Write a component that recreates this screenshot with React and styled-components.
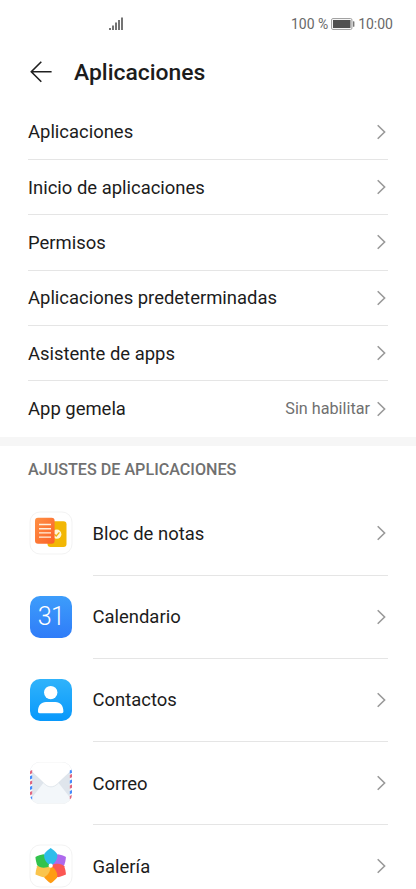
import React from 'react';
import styled, { createGlobalStyle } from 'styled-components';

const GlobalStyle = createGlobalStyle`
  * { box-sizing: border-box; }
  html, body { margin: 0; background: #fff; }
  body { overflow: hidden; font-family: Roboto, sans-serif; color: #1c1c1c; }
  svg { display: block; flex: none; }
`;

const Screen = styled.div`
  width: 416px;
  height: 889px;
  overflow: hidden;
  background: #fff;
`;

const StatusBar = styled.div`
  display: flex;
  align-items: center;
  justify-content: space-between;
  height: 48px;
  padding: 0 23px 0 108px;
`;

const StatusGroup = styled.div`
  display: flex;
  align-items: center;
  font-size: 14px;
  line-height: 20px;
  color: #696969;
  white-space: pre;
`;

const StatusText = styled.span`
  width: ${(p) => p.$width}px;
  text-align: ${(p) => p.$align || 'left'};
`;

const Header = styled.header`
  display: flex;
  align-items: center;
  gap: 21px;
  height: 56.6px;
  padding: 0 28px 8px 29px;
`;

const Title = styled.h1`
  margin: 2px 0 0;
  font-size: 22.9px;
  font-weight: 500;
  line-height: 30px;
`;

const List = styled.div`
  padding: 0 28px;
`;

const Row = styled.div`
  display: flex;
  align-items: center;
  height: ${(p) => (p.$large ? 83.2 : 55.35)}px;
`;

const RowBody = styled.div`
  display: flex;
  flex: 1;
  align-items: center;
  height: 100%;
  padding-right: 1px;
  border-bottom: ${(p) => (p.$last ? 0 : 1)}px solid #e5e5e5;
`;

const Label = styled.span`
  flex: 1;
  padding-top: 1px;
  font-size: 18.45px;
  line-height: 24px;
`;

const Value = styled.span`
  margin-right: 6px;
  padding-top: 1px;
  font-size: 16.2px;
  line-height: 22px;
  color: #707070;
`;

const Band = styled.div`
  height: 9.7px;
  background: #f6f6f6;
`;

const SectionTitle = styled.h2`
  display: flex;
  align-items: center;
  height: 46px;
  margin: 0;
  padding: 1px 28px 0;
  font-size: 16.15px;
  font-weight: 500;
  color: #707070;
`;

const IconSlot = styled.div`
  width: 64.5px;
  padding: 0 0 1px 1px;
`;

const Chevron = () => (
  <svg width="11" height="18" viewBox="0 0 11 18" fill="none" stroke="#999" strokeWidth="1.6">
    <path d="M1.7 2.2 8.6 9 1.7 15.8" />
  </svg>
);

const Tile = ({ children, fill = '#fff', stroke = '#f3f3f3' }) => (
  <svg width="44" height="44" viewBox="0 0 44 44">
    <rect x="1" y="1" width="42" height="42" rx="10" fill={fill} stroke={stroke} />
    {children}
  </svg>
);

const NotesIcon = () => (
  <Tile>
    <defs>
      <linearGradient id="noteOrange" x1="0" y1="0" x2="1" y2="1">
        <stop stopColor="#ff9044" />
        <stop offset="1" stopColor="#fb6128" />
      </linearGradient>
    </defs>
    <rect x="18.5" y="10.2" width="19" height="25.8" rx="3" fill="#f2b705" />
    <circle cx="27.8" cy="23.2" r="4.6" fill="#fff5d6" />
    <path d="m25.4 23.2 1.8 1.8 3.2-3.6" fill="none" stroke="#edb20b" strokeWidth="1.3" />
    <rect x="6" y="6.8" width="19.6" height="26" rx="3" fill="url(#noteOrange)" />
    <path d="M10 13.5h12M10 17.7h12M10 21.9h12M10 26.1h12" stroke="#fff0dc" strokeWidth="1.4" />
  </Tile>
);

const CalendarIcon = () => (
  <Tile fill="url(#calBlue)" stroke="none">
    <defs>
      <linearGradient id="calBlue" x1="0" y1="0" x2="0" y2="1">
        <stop stopColor="#3d9dfb" />
        <stop offset="1" stopColor="#2f7cf8" />
      </linearGradient>
    </defs>
    <text x="22" y="30.2" textAnchor="middle" fontFamily="Roboto, sans-serif" fontSize="25.2" fontWeight="300" letterSpacing="-.6" fill="#fff">31</text>
  </Tile>
);

const ContactsIcon = () => (
  <Tile fill="url(#contactBlue)" stroke="none">
    <defs>
      <linearGradient id="contactBlue" x1="0" y1="0" x2="0" y2="1">
        <stop stopColor="#30b3fb" />
        <stop offset="1" stopColor="#0898fb" />
      </linearGradient>
    </defs>
    <circle cx="21.7" cy="14.6" r="6.7" fill="#fff" />
    <path d="M9 33.5c0-6 3.2-9.5 8-9.5h9.4c4.8 0 8 3.5 8 9.5 0 1-.7 1.7-1.7 1.7h-22c-1 0-1.7-.7-1.7-1.7z" fill="#fff" />
  </Tile>
);

const MailIcon = () => (
  <svg width="44" height="44" viewBox="0 0 44 44">
    <defs>
      <clipPath id="mailTile"><rect x="1" y="1" width="42" height="42" rx="10" /></clipPath>
    </defs>
    <g clipPath="url(#mailTile)">
      <rect width="44" height="44" fill="#dfe5ec" />
      <path d="M3 36.5 16 20h12l13 16.5L44 44H0z" fill="#f3f7fa" />
      <path d="M0 0h44v9h-1L28.5 22.8C24.5 26.8 19.5 26.8 15.5 22.8L1 9H0z" fill="#fff" />
      <path d="M1 9 15.5 22.8c4 4 9 4 13 0L43 9" fill="none" stroke="#d8dfe6" strokeWidth=".7" />
      <rect x="1" y="1" width="42" height="42" rx="10" fill="none" stroke="#f3f3f3" />
      <path d="M0 9h3.2v30L0 44zM40.8 9H44v35l-3.2-5z" fill="#f6f8fb" />
      <path d="m0 10.500 3.200-1.500v3.200L0 13.700zm0 10.500 3.200-1.500v3.200L0 24.200zm0 10.500L3.200 30v3.200L0 34.700zM40.800 14l3.200-1.500v3.200l-3.200 1.500zm0 10.500L44 23v3.200l-3.200 1.500zm0 10.500 3.200-1.500v3.200l-3.200 1.500z" fill="#e0667f" />
      <path d="m0 15.700 3.200-1.500v3.200L0 18.900zm0 10.500 3.200-1.500v3.200L0 29.400zm0 10.500 3.200-1.500v3.200L0 39.900zM40.800 9.500 44 8v3.200l-3.200 1.500zm0 10L44 18v3.200l-3.200 1.500zm0 10.500 3.200-1.500v3.200l-3.200 1.500z" fill="#448bfb" />
    </g>
  </svg>
);

const PETALS = [
  ['#ae69ed', 60],
  ['#fb5753', 120],
  ['#ff9c12', 180],
  ['#fac44d', 240],
  ['#32c34d', 300],
  ['#2dbdea', 0],
];

const GalleryIcon = () => (
  <Tile>
    {PETALS.map(([color, angle]) => (
      <path
        key={color}
        d="M0 0C-5-3-7.500-8-6.300-12-4.500-14-2.200-16.200 0-17.600 2.200-16.200 4.500-14 6.300-12 7.500-8 5-3 0 0z"
        fill={color}
        transform={`translate(21.7 21.7) rotate(${angle})`}
      />
    ))}
    <circle cx="21.7" cy="21.7" r="2.1" fill="#fff" />
  </Tile>
);

const SETTINGS = [
  ['Aplicaciones'],
  ['Inicio de aplicaciones'],
  ['Permisos'],
  ['Aplicaciones predeterminadas'],
  ['Asistente de apps'],
  ['App gemela', 'Sin habilitar'],
];

const APPS = [
  ['Bloc de notas', NotesIcon],
  ['Calendario', CalendarIcon],
  ['Contactos', ContactsIcon],
  ['Correo', MailIcon],
  ['Galería', GalleryIcon],
];

export default function App() {
  return (
    <Screen>
      <GlobalStyle />
      <StatusBar>
        <svg width="16" height="14" viewBox="0 0 16 14" fill="#747474">
          <path d="M1 11h2v2H1zM4 8.5h2V13H4zM7 5.5h2V13H7zM10 3h2v10h-2zM13 .5h2V13h-2z" />
        </svg>
        <StatusGroup>
          <StatusText $width={40}>100 %</StatusText>
          <svg width="24" height="12" viewBox="0 0 24 12">
            <rect x=".6" y=".6" width="20.3" height="10.8" rx="1.2" fill="#fff" stroke="#999" />
            <rect x="2" y="2" width="17.5" height="8" fill="#505050" />
            <rect x="21.9" y="3.2" width="1.5" height="5.6" rx=".5" fill="#777" />
          </svg>
          <StatusText $width={38} $align="right">10:00</StatusText>
        </StatusGroup>
      </StatusBar>
      <Header>
        <svg width="24" height="24" viewBox="0 0 24 24" fill="none" stroke="#202020" strokeWidth="1.6">
          <path d="M2.3 11.7H22.6M12.3 1.7l-10 10 10 10" />
        </svg>
        <Title>Aplicaciones</Title>
      </Header>
      <List>
        {SETTINGS.map(([label, value], i) => (
          <Row key={label}>
            <RowBody $last={i === SETTINGS.length - 1}>
              <Label>{label}</Label>
              {value && <Value>{value}</Value>}
              <Chevron />
            </RowBody>
          </Row>
        ))}
      </List>
      <Band />
      <SectionTitle>AJUSTES DE APLICACIONES</SectionTitle>
      <List>
        {APPS.map(([label, Icon]) => (
          <Row key={label} $large>
            <IconSlot><Icon /></IconSlot>
            <RowBody>
              <Label>{label}</Label>
              <Chevron />
            </RowBody>
          </Row>
        ))}
      </List>
    </Screen>
  );
}
